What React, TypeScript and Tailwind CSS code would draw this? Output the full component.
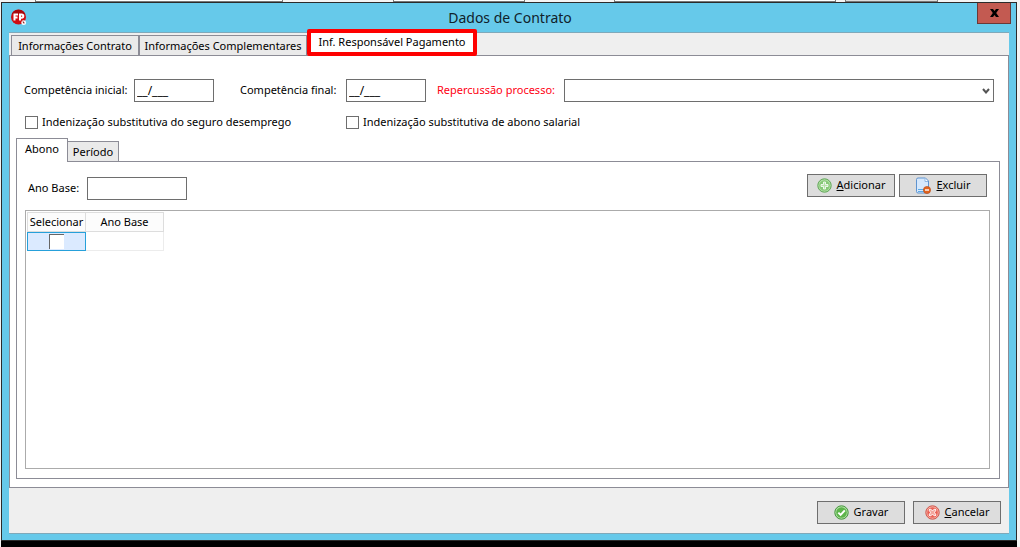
import React from "react";

const field = "border border-[#6e6e6e] bg-white h-[23px] outline-none";
const btn =
  "flex h-[23px] w-[88px] items-center justify-center gap-[5px] border border-[#6e6e6e] bg-[#dddddd]";
const tab = "border border-b-0 border-[#8c8c96] bg-[#eaeaea] pt-px whitespace-nowrap";

function AppIcon() {
  return (
    <svg width="16" height="17" viewBox="0 0 16 17" aria-hidden="true">
      <circle cx="7.5" cy="8" r="7.5" fill="#cf0d12" />
      <path d="M.8 5a7.500 7.500 0 0 1 13.400 0z" fill="#a8080c" />
      <g stroke="#fff" strokeWidth="2" fill="none">
        <path d="M3.500 11.500V5.500H7M3.500 8.500H6.500" />
        <path d="M9 11.500V5.500H10.700a1.500 1.500 0 0 1 0 3.200H9" />
      </g>
      <circle cx="12.700" cy="13.700" r="2.400" fill="#fff" />
      <path d="M11.800 12.500l1.500 1.900" stroke="#8a2022" strokeWidth="1.100" />
    </svg>
  );
}

function RoundIcon({ kind }: { kind: "add" | "ok" | "cancel" }) {
  const ring = kind === "cancel" ? "#cf5348" : kind === "ok" ? "#3f9438" : "#5fa556";
  const pale = kind === "cancel" ? "#f6b0a6" : "#b4e0a8";
  const core = kind === "cancel" ? "#ea6458" : kind === "ok" ? "#5cb44a" : "#86c876";
  return (
    <svg width="15" height="15" viewBox="0 0 15 15" aria-hidden="true">
      <circle cx="7.5" cy="7.5" r="6.700" fill={pale} stroke={ring} />
      <circle cx="7.5" cy="7.5" r="5.300" fill={core} />
      {kind === "add" && (
        <path d="M6.500 4H8.500V6.500H11V8.500H8.500V11H6.500V8.500H4V6.500H6.500z" fill="#b4e0a8" stroke="#fff" strokeWidth=".8" />
      )}
      {kind === "ok" && <path d="M4.300 7.600L6.600 9.900L10.800 5.300" fill="none" stroke="#fff" strokeWidth="2" />}
      {kind === "cancel" && (
        <path d="M5 4L7.500 5.500L10 4L11 5L9.500 7.500L11 10L10 11L7.500 9.500L5 11L4 10L5.500 7.500L4 5z" fill="#f3a79e" stroke="#fff" strokeWidth=".9" />
      )}
    </svg>
  );
}

function DeleteIcon() {
  return (
    <svg width="16" height="17" viewBox="0 0 16 17" aria-hidden="true">
      <path d="M1.500 2.500a1.500 1.500 0 0 1 1.500-1.500H10.500L13.500 4V16H3a1.500 1.500 0 0 1-1.500-1.500z" fill="#d6e8fc" stroke="#5f93cf" />
      <path d="M10 1.500V4.500H13" fill="#fff" stroke="#8fb6e2" />
      <path d="M3 12.500H9M3 14.500H9" stroke="#5aaae6" strokeWidth="1.200" />
      <circle cx="12" cy="13" r="3.600" fill="#e0631f" stroke="#b9480f" strokeWidth=".6" />
      <path d="M10 13H14" stroke="#fff" strokeWidth="1.400" />
    </svg>
  );
}

function Check({ label }: { label: string }) {
  return (
    <label className="flex items-center gap-1 whitespace-nowrap">
      <input type="checkbox" className="size-[13px] shrink-0 appearance-none border border-[#6e6e6e] bg-white checked:bg-[#6e6e6e]" />
      {label}
    </label>
  );
}

export default function App() {
  return (
    <div className="flex h-screen min-h-[400px] flex-col bg-[#f4f4f4] font-['Noto_Sans',sans-serif] text-[11px] text-black">
      <div className="flex h-[2px] shrink-0 pl-[35px]" aria-hidden="true">
        <div className="w-[248px] border-x border-b border-[#777] bg-white" />
        <div className="ml-[110px] w-[132px] border-x border-b border-[#777] bg-white" />
        <div className="ml-[89px] w-[222px] border-x border-b border-[#777] bg-white" />
        <div className="ml-[9px] w-[93px] border-x border-b border-[#777] bg-[#ddd]" />
      </div>
      <div className="mr-[3px] ml-px flex min-h-0 flex-1 flex-col border border-[#2b2b2b] bg-[#66c9ea] px-[7px] pb-[6px]">
        <header className="flex h-[29px] shrink-0 items-center justify-between">
          <span className="flex w-[34px] pl-[2px]"><AppIcon /></span>
          <h1 className="text-sm text-[#10222b]">Dados de Contrato</h1>
          <button type="button" aria-label="Fechar" className="mr-[-2px] flex h-[21px] w-[34px] items-center justify-center self-start border border-t-0 border-[#6b3836] bg-[#c35a51]">
            <svg width="9" height="8" viewBox="0 0 9 8" aria-hidden="true">
              <path d="M0 0H3L4.500 2L6 0H9L6.200 4L9 8H6L4.500 6L3 8H0L2.800 4z" />
            </svg>
          </button>
        </header>
        <div className="flex min-h-0 flex-1 flex-col border-y border-[#7fa9ba] bg-[#efefef]">
          <div className="flex h-[22px] shrink-0 items-end pl-[2px]" role="tablist">
            <button type="button" role="tab" aria-selected="false" className={`${tab} h-5 w-[128px]`}>Informações Contrato</button>
            <button type="button" role="tab" aria-selected="false" className={`${tab} h-5 w-[168px]`}>Informações Complementares</button>
            <button type="button" role="tab" aria-selected="true" className="relative mb-[-1px] h-[27px] w-[170px] rounded-xs border-4 border-[#fe0000] bg-white whitespace-nowrap">Inf. Responsável Pagamento</button>
          </div>
          <main className="flex min-h-0 flex-1 flex-col border border-[#8c8c96] bg-white px-[6px] pb-2">
            <div className="mt-[23px] flex h-[23px] shrink-0 items-center pr-2 pl-2 whitespace-nowrap">
              <label htmlFor="ini" className="w-[110px]">Competência inicial:</label>
              <input id="ini" defaultValue="__/___" className={`${field} w-20 px-[2px] text-xs`} />
              <label htmlFor="fim" className="ml-[26px] w-[106px]">Competência final:</label>
              <input id="fim" defaultValue="__/___" className={`${field} w-20 px-[2px] text-xs`} />
              <label htmlFor="rep" className="ml-[11px] w-[127px] text-[#ff0012]">Repercussão processo:</label>
              <div className="relative flex min-w-0 flex-1">
                <select id="rep" className={`${field} w-full appearance-none`}><option></option></select>
                <svg className="pointer-events-none absolute top-[9px] right-[4px]" width="8" height="6" viewBox="0 0 8 6" aria-hidden="true">
                  <path d="M1 1L4 4.500L7 1" fill="none" stroke="#555" strokeWidth="2" />
                </svg>
              </div>
            </div>
            <div className="mt-[11px] flex h-[18px] shrink-0 items-center pl-[9px]">
              <div className="w-[321px]"><Check label="Indenização substitutiva do seguro desemprego" /></div>
              <Check label="Indenização substitutiva de abono salarial" />
            </div>
            <div className="mt-[7px] flex h-[23px] shrink-0 items-end" role="tablist">
              <button type="button" role="tab" aria-selected="true" className="relative mb-[-1px] h-6 w-[52px] border border-b-0 border-[#8c8c96] bg-white pb-[2px]">Abono</button>
              <button type="button" role="tab" aria-selected="false" className={`${tab} h-5 w-[51px] border-l-0`}>Período</button>
            </div>
            <section className="mr-[2px] flex min-h-0 flex-1 flex-col border border-[#8c8c96] pr-[9px] pb-[9px] pl-2">
              <div className="mt-3 flex shrink-0 items-start justify-between">
                <div className="mt-[3px] flex items-center pl-[3px]">
                  <label htmlFor="ano" className="w-[59px]">Ano Base:</label>
                  <input id="ano" className={`${field} w-[100px] px-1`} />
                </div>
                <div className="flex gap-1 pr-[3px]">
                  <button type="button" className={btn}><RoundIcon kind="add" /><span><u>A</u>dicionar</span></button>
                  <button type="button" className={btn}><DeleteIcon /><span><u>E</u>xcluir</span></button>
                </div>
              </div>
              <div className="mt-[10px] min-h-0 flex-1 border border-[#ababab] p-px">
                <table className="table-fixed border-separate border-spacing-0 text-center">
                  <thead>
                    <tr className="h-5">
                      <th className="w-[59px] border border-[#dddddd] bg-[#fcfcfc] p-0 font-normal">Selecionar</th>
                      <th className="w-[78px] border border-l-0 border-[#dddddd] bg-[#fcfcfc] p-0 font-normal">Ano Base</th>
                    </tr>
                  </thead>
                  <tbody>
                    <tr className="h-[19px]">
                      <td className="border border-[#26a0da] bg-[#dbeaff] p-0">
                        <input type="checkbox" aria-label="Selecionar linha" className="mx-auto block size-[15px] appearance-none border-t border-l border-[#666] bg-white" />
                      </td>
                      <td className="border-r border-b border-[#ececec] p-0"></td>
                    </tr>
                  </tbody>
                </table>
              </div>
            </section>
          </main>
          <footer className="flex h-[45px] shrink-0 items-center justify-end gap-2 pt-1 pr-2">
            <button type="button" className={btn}><RoundIcon kind="ok" /><span>Gravar</span></button>
            <button type="button" className={btn}><RoundIcon kind="cancel" /><span><u>C</u>ancelar</span></button>
          </footer>
        </div>
      </div>
      <div className="mr-[3px] ml-px h-[6px] shrink-0 bg-black" />
    </div>
  );
}
